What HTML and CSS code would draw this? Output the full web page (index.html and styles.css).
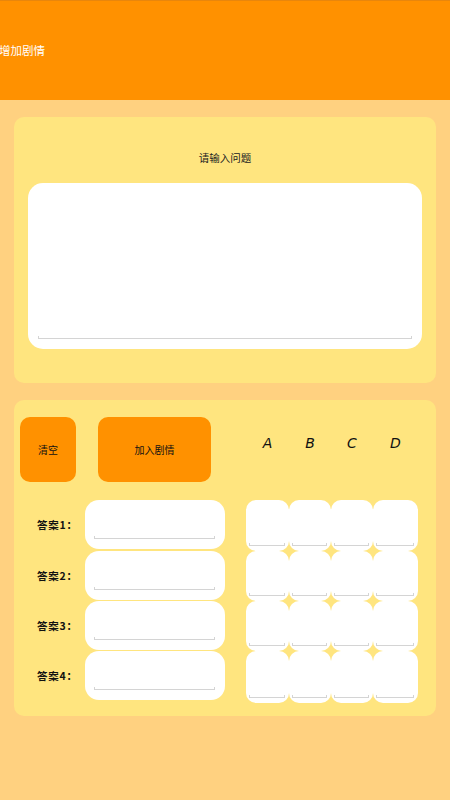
FILE: index.html
```html
<!DOCTYPE html>
<html lang="zh">
<head>
<meta charset="utf-8">
<title>增加剧情</title>
<link rel="stylesheet" href="styles.css">
</head>
<body>
<header class="appbar"><span class="appbar-title">增加剧情</span></header>
<main class="page">
  <section class="card card-question">
    <div class="q-title">请输入问题</div>
    <div class="q-input"><div class="line"></div></div>
  </section>
  <section class="card card-answers">
    <div class="top-row">
      <button class="btn btn-clear">清空</button>
      <button class="btn btn-add">加入剧情</button>
      <div class="letters">
        <span>A</span><span>B</span><span>C</span><span>D</span>
      </div>
    </div>
    <div class="answers">
      <div class="answer-list">
        <div class="answer-row"><span class="a-label">答案1：</span><div class="a-input"><div class="line"></div></div></div>
        <div class="answer-row"><span class="a-label">答案2：</span><div class="a-input"><div class="line"></div></div></div>
        <div class="answer-row"><span class="a-label">答案3：</span><div class="a-input"><div class="line"></div></div></div>
        <div class="answer-row"><span class="a-label">答案4：</span><div class="a-input"><div class="line"></div></div></div>
      </div>
      <div class="box-grid">
        <div class="box"><div class="line"></div></div>
        <div class="box"><div class="line"></div></div>
        <div class="box"><div class="line"></div></div>
        <div class="box"><div class="line"></div></div>
        <div class="box"><div class="line"></div></div>
        <div class="box"><div class="line"></div></div>
        <div class="box"><div class="line"></div></div>
        <div class="box"><div class="line"></div></div>
        <div class="box"><div class="line"></div></div>
        <div class="box"><div class="line"></div></div>
        <div class="box"><div class="line"></div></div>
        <div class="box"><div class="line"></div></div>
        <div class="box"><div class="line"></div></div>
        <div class="box"><div class="line"></div></div>
        <div class="box"><div class="line"></div></div>
        <div class="box"><div class="line"></div></div>
      </div>
    </div>
  </section>
</main>
</body>
</html>
```
FILE: styles.css
```css
* { box-sizing: border-box; }
html, body {
  margin: 0;
  padding: 0;
  background: #FFD180;
  font-family: "Noto Sans CJK SC", "Noto Sans", sans-serif;
}
body { width: 450px; min-height: 800px; }

.appbar {
  height: 100px;
  background: #FF9100;
  border-top: 1px solid #E8860C;
  display: flex;
  align-items: center;
  padding-left: 0;
}
.appbar-title {
  color: #ffffff;
  font-size: 11.5px;
  line-height: 14px;
  margin-left: -1px;
  margin-top: -1px;
}

.page {
  padding: 17px 14px 0 14px;
  display: flex;
  flex-direction: column;
  gap: 17px;
}

.card {
  background: #FFE57F;
  border-radius: 10px;
}

.card-question {
  height: 266px;
  padding: 33px 14px 0 14px;
}
.q-title {
  text-align: center;
  font-size: 10.5px;
  line-height: 16px;
  color: #222;
  height: 16px;
  margin-bottom: 17px;
}
.q-input {
  position: relative;
  height: 166px;
  background: #fff;
  border-radius: 15px;
}

.line {
  position: absolute;
  height: 3px;
  border-bottom: 1px solid #d4d4d4;
  border-left: 1px solid #d4d4d4;
  border-right: 1px solid #d4d4d4;
}
.q-input .line { left: 10px; right: 10px; bottom: 10px; }

.card-answers {
  height: 316px;
  padding: 17px 0 0 6px;
}

.top-row {
  display: flex;
  align-items: flex-start;
  height: 65px;
}
.btn {
  border: none;
  background: #FF9100;
  border-radius: 10px;
  height: 65px;
  padding: 0;
  font-family: "Noto Sans CJK SC", sans-serif;
  font-size: 10px;
  color: #111;
}
.btn-clear { width: 56px; }
.btn-add { width: 113px; margin-left: 22px; }

.letters {
  margin-left: 35px;
  width: 172px;
  display: grid;
  grid-template-columns: 43px 42px 42px 45px;
  padding-top: 17px;
  font-family: "DejaVu Sans", sans-serif;
  font-size: 14px;
  line-height: 18px;
  color: #111;
  text-align: center;
}
.letters span { font-style: oblique; font-weight: 300; }

.answers {
  display: flex;
  margin-top: 18px;
}
.answer-list {
  display: grid;
  grid-template-rows: 51px 50px 50px 52px;
  width: 205px;
}
.answer-row {
  display: flex;
  align-items: flex-start;
}
.a-label {
  width: 65px;
  padding-left: 17px;
  font-size: 10.5px;
  font-weight: 700;
  letter-spacing: 0.8px;
  color: #111;
  line-height: 49px;
  white-space: nowrap;
}
.a-input {
  position: relative;
  width: 140px;
  height: 49px;
  background: #fff;
  border-radius: 14px;
}
.a-input .line { left: 9px; right: 10px; bottom: 10px; }

.box-grid {
  margin-left: 21px;
  display: grid;
  grid-template-columns: 43px 42px 42px 45px;
  grid-template-rows: 51px 50px 50px 52px;
}
.box {
  position: relative;
  background: #fff;
  border-radius: 10px;
}
.box .line { left: 3px; right: 4px; bottom: 5px; }
```
